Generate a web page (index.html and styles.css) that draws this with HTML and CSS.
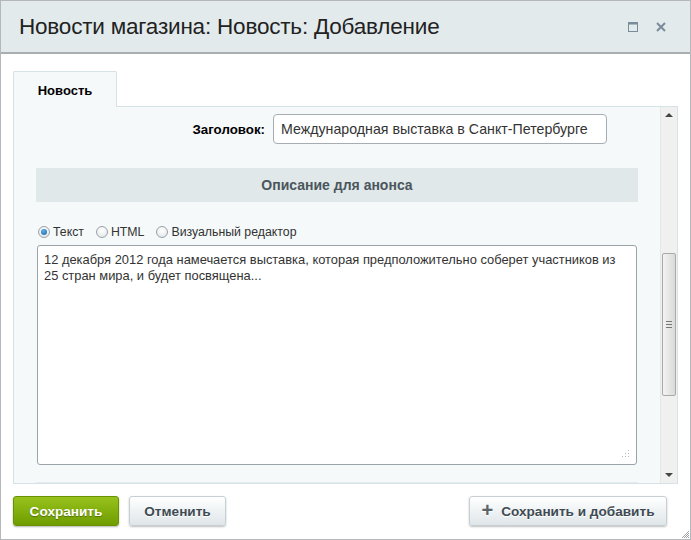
FILE: index.html
```html
<!DOCTYPE html>
<html lang="ru">
<head>
<meta charset="utf-8">
<title>Новости магазина</title>
<link rel="stylesheet" href="styles.css">
</head>
<body>
<div class="window">
  <div class="header">
    <div class="title">Новости магазина: Новость: Добавление</div>
    <div class="hicons">
      <svg class="hicon" width="10" height="10" viewBox="0 0 10 10"><rect x="0.5" y="0.5" width="9" height="9" fill="none" stroke="#7a8b99" stroke-width="1"/><line x1="0" y1="1.5" x2="10" y2="1.5" stroke="#7a8b99" stroke-width="2"/></svg>
      <svg class="hicon" width="10" height="10" viewBox="0 0 10 10"><path d="M1 1 L9 9 M9 1 L1 9" stroke="#7a8b99" stroke-width="2"/></svg>
    </div>
  </div>
  <div class="body">
    <div class="tabs">
      <div class="tab">Новость</div>
      <div class="tabline"></div>
    </div>
    <div class="panel">
      <div class="content">
        <div class="row">
          <div class="label">Заголовок:</div>
          <div class="input">Международная выставка в Санкт-Петербурге</div>
        </div>
        <div class="section">Описание для анонса</div>
        <div class="radios">
          <label class="radio"><span class="dot on"></span>Текст</label>
          <label class="radio"><span class="dot"></span>HTML</label>
          <label class="radio"><span class="dot"></span>Визуальный редактор</label>
        </div>
        <div class="textarea">12 декабря 2012 года намечается выставка, которая предположительно соберет участников из 25 стран мира, и будет посвящена...
          <svg class="grip" width="9" height="9" viewBox="0 0 9 9"><g fill="#b5bcc0"><rect x="7" y="1" width="1" height="1"/><rect x="4" y="4" width="1" height="1"/><rect x="7" y="4" width="1" height="1"/><rect x="1" y="7" width="1" height="1"/><rect x="4" y="7" width="1" height="1"/><rect x="7" y="7" width="1" height="1"/></g></svg>
        </div>
        <div class="nextsec"></div>
      </div>
      <div class="scrollbar">
        <div class="arrow up"></div>
        <div class="track">
          <div class="thumb"><span class="lines"></span></div>
        </div>
        <div class="arrow down"></div>
      </div>
    </div>
  </div>
  <div class="footer">
    <div class="btn save">Сохранить</div>
    <div class="btn grey cancel">Отменить</div>
    <div class="spacer"></div>
    <div class="btn grey add"><span class="plus">+</span>Сохранить и добавить</div>
  </div>
  <svg class="corner" width="10" height="10" viewBox="0 0 10 10"><path d="M9 2 L2 9 M9 4 L4 9 M9 6 L6 9 M9 8 L8 9" stroke="#9aa3a8" stroke-width="1"/></svg>
</div>
</body>
</html>
```
FILE: styles.css
```css
* { box-sizing: border-box; }
html, body { margin: 0; padding: 0; background: #fff; }
body { font-family: "Liberation Sans", Arial, sans-serif; }

.window {
  position: relative;
  width: 691px;
  height: 540px;
  border: 1px solid #b4b8ba;
  background: #fff;
}

.header {
  height: 53px;
  background: #e2eaec;
  border-bottom: 2px solid #a9aeb0;
  display: flex;
  align-items: center;
  padding: 0 24px 0 18px;
}
.title {
  flex: 1;
  font-size: 22.5px;
  color: #222;
  letter-spacing: -0.2px;
  margin-top: 1px;
}
.hicons { display: flex; gap: 18px; align-items: center; margin-top: 1px; }
.hicon { display: block; }

.body { padding: 17px 12px 0 12px; }
.tabs { display: flex; align-items: flex-end; height: 36px; }
.tab {
  width: 104px;
  height: 36px;
  background: #f5f9fa;
  border: 1px solid #d6e2e7;
  border-bottom: none;
  border-radius: 2px 2px 0 0;
  font-size: 13px;
  font-weight: bold;
  color: #000;
  display: flex;
  align-items: center;
  justify-content: center;
  padding-top: 1px;
}
.tabline { flex: 1; border-bottom: 1px solid #d6e2e7; }

.panel {
  display: flex;
  height: 377px;
  background: #f5f9fa;
  border: 1px solid #d6e2e7;
  border-top: none;
}
.content { flex: 1; padding: 7px 0 0 22px; overflow: hidden; }

.row { display: flex; align-items: center; height: 30px; }
.label {
  width: 237px;
  text-align: right;
  font-size: 13.3px;
  font-weight: bold;
  color: #000;
  padding-right: 8px;
}
.input {
  width: 334px;
  height: 30px;
  border: 1px solid #a6aeb4;
  border-radius: 4px;
  background: #fff;
  font-size: 14.2px;
  color: #333;
  display: flex;
  align-items: center;
  padding-left: 7px;
}

.section {
  margin-top: 24px;
  width: 602px;
  height: 34px;
  background: #e0e8ea;
  font-size: 14px;
  font-weight: bold;
  color: #4a565c;
  display: flex;
  align-items: center;
  justify-content: center;
}

.radios {
  display: flex;
  align-items: center;
  margin-top: 21px;
  height: 18px;
  font-size: 12.3px;
  color: #333;
  padding-left: 2px;
}
.radio { display: flex; align-items: center; margin-right: 12px; }
.dot {
  width: 12px;
  height: 12px;
  border-radius: 50%;
  border: 1px solid #9aa2a8;
  background: radial-gradient(circle at 50% 35%, #ffffff, #dfe3e6);
  margin-right: 3px;
  position: relative;
}
.dot.on::after {
  content: "";
  position: absolute;
  left: 2px; top: 2px;
  width: 6px; height: 6px;
  border-radius: 50%;
  background: radial-gradient(circle at 40% 35%, #5fb0e8, #1a5f9c);
}

.textarea {
  position: relative;
  margin-top: 4px;
  margin-left: 1px;
  width: 600px;
  height: 220px;
  background: #fff;
  border: 1px solid #9aa3aa;
  border-radius: 3px;
  font-size: 12.9px;
  line-height: 16px;
  color: #333;
  padding: 6px 10px 0 6px;
}
.grip { position: absolute; right: 6px; bottom: 6px; }

.nextsec {
  margin-top: 17px;
  width: 602px;
  height: 4px;
  border-top: 1px solid #e6ecee;
  background: #f1f5f6;
}

.scrollbar {
  width: 17px;
  background: #f0f0f0;
  border-left: 1px solid #e6e6e6;
  display: flex;
  flex-direction: column;
}
.arrow { height: 17px; position: relative; }
.arrow::after {
  content: "";
  position: absolute;
  left: 4px;
  width: 0; height: 0;
  border-left: 4px solid transparent;
  border-right: 4px solid transparent;
}
.arrow.up::after { top: 6px; border-bottom: 4px solid #444; }
.arrow.down::after { top: 7px; border-top: 4px solid #444; }
.track { flex: 1; padding-top: 129px; }
.thumb {
  margin-left: 1px;
  width: 14px;
  height: 143px;
  border: 1px solid #a9a9a9;
  border-radius: 2px;
  background: linear-gradient(to right, #f3f3f3, #dadada);
  display: flex;
  align-items: center;
  justify-content: center;
}
.lines {
  width: 6px;
  height: 7px;
  border-top: 1px solid #777;
  border-bottom: 1px solid #777;
  position: relative;
}
.lines::after {
  content: "";
  position: absolute;
  left: 0; right: 0; top: 2px;
  border-top: 1px solid #777;
}

.footer {
  display: flex;
  align-items: center;
  padding: 12px 23px 0 12px;
}
.btn {
  height: 30px;
  border-radius: 3px;
  font-size: 13.6px;
  font-weight: bold;
  display: flex;
  align-items: center;
  justify-content: center;
}
.save {
  width: 106px;
  color: #fff;
  background: linear-gradient(to bottom, #97c21c, #6f9d00);
  border: 1px solid #6a9200;
  box-shadow: 0 1px 2px rgba(0,0,0,0.3);
  text-shadow: 0 1px 1px rgba(0,0,0,0.35);
}
.grey {
  color: #3f4b53;
  background: linear-gradient(to bottom, #ffffff, #dfe6e9);
  border: 1px solid #c6d0d4;
  box-shadow: 0 1px 2px rgba(0,0,0,0.25);
  text-shadow: 0 1px 0 #fff;
}
.cancel { width: 97px; margin-left: 10px; }
.spacer { flex: 1; }
.add { width: 198px; }
.plus { font-size: 20px; color: #5a6369; margin-right: 8px; margin-top: -2px; font-weight: bold; }

.corner { position: absolute; right: 0; bottom: 0; }
```
